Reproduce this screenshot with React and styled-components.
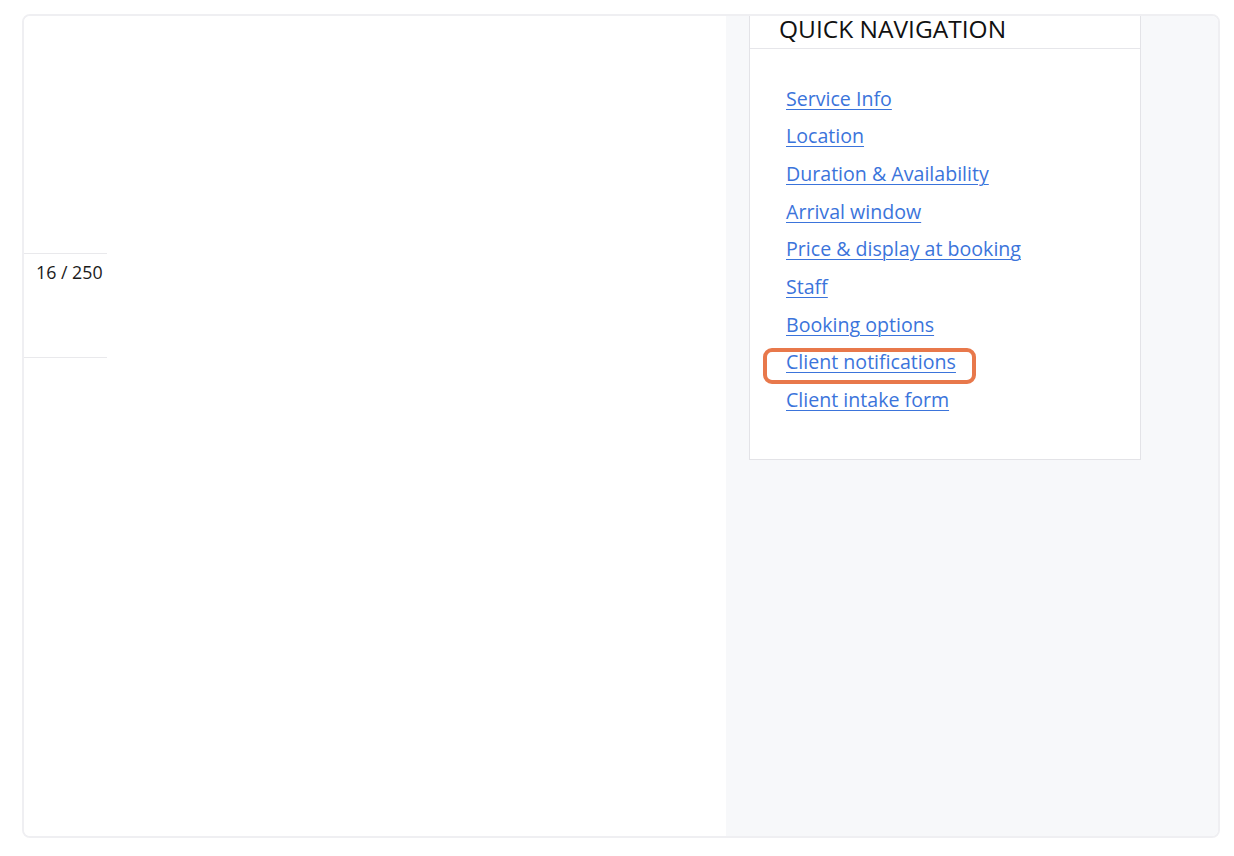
import React from "react";
import styled, { createGlobalStyle } from "styled-components";

const Global = createGlobalStyle`
  html, body { margin: 0; padding: 0; background: #ffffff; }
  body { font-family: "Open Sans", "Noto Sans", sans-serif; color: #1a1a1a; }
  * { box-sizing: border-box; }
`;

const Page = styled.div`
  width: 1234px;
  height: 856px;
  padding: 14px 14px 18px 22px;
`;

const Frame = styled.div`
  display: flex;
  width: 100%;
  height: 100%;
  border: 2px solid #efeff2;
  border-radius: 8px;
  overflow: hidden;
`;

const LeftPanel = styled.div`
  width: 702px;
  flex: none;
  background: #ffffff;
`;

const CounterStrip = styled.div`
  margin-top: 237px;
  width: 83px;
  height: 105px;
  border-top: 1px solid #e9e9ec;
  border-bottom: 1px solid #e9e9ec;
  padding: 6px 0 0 12px;
  font-size: 17.8px;
  color: #1b1b1b;
`;

const RightPanel = styled.div`
  flex: 1;
  background: #f7f8fa;
  padding-left: 23px;
`;

const NavCard = styled.div`
  width: 392px;
  height: 444px;
  background: #ffffff;
  border: 1px solid #e3e3e7;
  border-top: none;
`;

const NavHeader = styled.div`
  height: 33px;
  border-bottom: 1px solid #e6e6ea;
  padding-left: 29px;
  font-size: 24.5px;
  font-weight: 530;
  line-height: 25px;
  color: #111111;
`;

const LinkList = styled.ul`
  list-style: none;
  margin: 0;
  padding: 30.5px 0 0 36px;
`;

const LinkItem = styled.li`
  position: relative;
  height: 37.7px;
  line-height: 37.7px;
`;

const NavLink = styled.a`
  position: relative;
  z-index: 1;
  font-size: 19.6px;
  color: #3b74db;
  text-decoration: underline;
  text-underline-offset: 3px;
  text-decoration-thickness: 1px;
`;

const Highlight = styled.span`
  position: absolute;
  left: -23px;
  top: 5px;
  width: 213px;
  height: 36px;
  border: 4px solid #e8784b;
  border-radius: 9px;
  pointer-events: none;
`;

const links = [
  "Service Info",
  "Location",
  "Duration & Availability",
  "Arrival window",
  "Price & display at booking",
  "Staff",
  "Booking options",
  "Client notifications",
  "Client intake form",
];

export default function App() {
  return (
    <>
      <Global />
      <Page>
        <Frame>
          <LeftPanel>
            <CounterStrip>16 / 250</CounterStrip>
          </LeftPanel>
          <RightPanel>
            <NavCard>
              <NavHeader>QUICK NAVIGATION</NavHeader>
              <LinkList>
                {links.map((l) => (
                  <LinkItem key={l}>
                    {l === "Client notifications" && <Highlight />}
                    <NavLink href="#">{l}</NavLink>
                  </LinkItem>
                ))}
              </LinkList>
            </NavCard>
          </RightPanel>
        </Frame>
      </Page>
    </>
  );
}
